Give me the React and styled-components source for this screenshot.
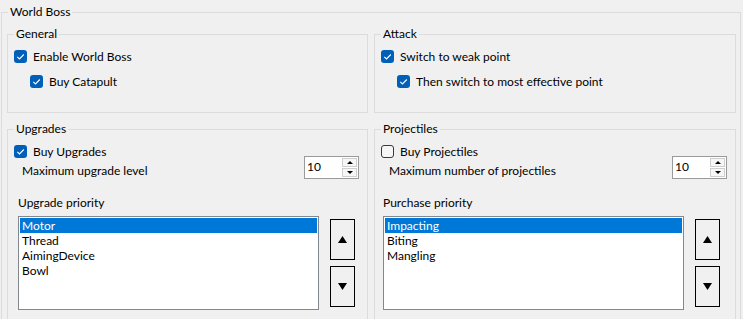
import React from "react";
import styled, { createGlobalStyle } from "styled-components";

const upgrades = ["Motor", "Thread", "AimingDevice", "Bowl"];
const projectiles = ["Impacting", "Biting", "Mangling"];

const Tick = () => (
  <svg width="13" height="13" viewBox="0 0 13 13">
    <path d="M3.3 6.8 L5.5 9 L9.8 4.5" stroke="#fff" strokeWidth="1.1" fill="none" />
  </svg>
);

const Check = ({ checked, nested, children }) => (
  <CheckRow $nested={nested}>
    <Box $checked={checked}>{checked && <Tick />}</Box>
    <span>{children}</span>
  </CheckRow>
);

const Triangle = ({ down, w = 9, h = 7 }) => (
  <svg width={w} height={h} viewBox={`0 0 ${w} ${h}`}>
    <polygon points={down ? `0,0 ${w},0 ${w / 2},${h}` : `0,${h} ${w},${h} ${w / 2},0`} fill="#000" />
  </svg>
);

const Spinner = ({ value }) => (
  <SpinBox>
    <SpinValue>{value}</SpinValue>
    <SpinButtons>
      <SpinButton><Triangle w={6} h={3} /></SpinButton>
      <SpinButton><Triangle down w={6} h={3} /></SpinButton>
    </SpinButtons>
  </SpinBox>
);

const Priority = ({ title, items, inset }) => (
  <PrioritySection $inset={inset}>
    <PriorityLabel>{title}</PriorityLabel>
    <ListRow>
      <ListBox>
        {items.map((item, i) => (
          <ListItem key={item} $selected={i === 0}>{item}</ListItem>
        ))}
      </ListBox>
      <MoveButtons>
        <MoveButton><Triangle /></MoveButton>
        <MoveButton><Triangle down /></MoveButton>
      </MoveButtons>
    </ListRow>
  </PrioritySection>
);

const App = () => (
  <>
    <GlobalStyle />
    <Page>
      <Frame>
        <Caption>World Boss</Caption>
        <Columns>
          <Group $height={87}>
            <Caption>General</Caption>
            <Body>
              <CheckList>
                <Check checked>Enable World Boss</Check>
                <Check checked nested>Buy Catapult</Check>
              </CheckList>
            </Body>
          </Group>
          <Group $height={87}>
            <Caption>Attack</Caption>
            <Body>
              <CheckList>
                <Check checked>Switch to weak point</Check>
                <Check checked nested>Then switch to most effective point</Check>
              </CheckList>
            </Body>
          </Group>
          <Group>
            <Caption>Upgrades</Caption>
            <Body>
              <Options>
                <OptionCheck><Check checked>Buy Upgrades</Check></OptionCheck>
                <OptionLabel>Maximum upgrade level</OptionLabel>
                <OptionSpin><Spinner value="10" /></OptionSpin>
              </Options>
              <Priority title="Upgrade priority" items={upgrades} inset={4} />
            </Body>
          </Group>
          <Group>
            <Caption>Projectiles</Caption>
            <Body>
              <Options>
                <OptionCheck><Check>Buy Projectiles</Check></OptionCheck>
                <OptionLabel>Maximum number of projectiles</OptionLabel>
                <OptionSpin><Spinner value="10" /></OptionSpin>
              </Options>
              <Priority title="Purchase priority" items={projectiles} inset={2} />
            </Body>
          </Group>
        </Columns>
      </Frame>
    </Page>
  </>
);

const GlobalStyle = createGlobalStyle`
  *, *::before, *::after { box-sizing: border-box; }
  html, body {
    margin: 0;
    overflow: hidden;
    background: #f0f0f0;
  }
  body {
    font-family: Lato, "Noto Sans", sans-serif;
    font-size: 12px;
    color: #000;
  }
`;

const Page = styled.div`
  padding: 4px 2px 0 1px;
`;

const Frame = styled.fieldset`
  margin: 0;
  padding: 0;
  min-width: 0;
  width: 740px;
  border: 1px solid #dcdcdc;
`;

const Caption = styled.legend`
  margin-left: 6px;
  padding: 0 2px;
  line-height: 16px;
`;

const Columns = styled.div`
  display: grid;
  grid-template-columns: 361px 362px;
  column-gap: 6px;
  row-gap: 8px;
  padding: 6px 4px 0 5px;
`;

const Group = styled.fieldset`
  margin: 0;
  padding: 0;
  min-width: 0;
  border: 1px solid #dcdcdc;
  height: ${(p) => (p.$height ? `${p.$height}px` : "auto")};
`;

const Body = styled.div`
  display: flex;
  flex-direction: column;
  padding: 7px 8px 14px 6px;
`;

const CheckList = styled.div`
  display: flex;
  flex-direction: column;
  gap: 10px;
`;

const CheckRow = styled.label`
  display: flex;
  align-items: center;
  gap: 6px;
  height: 15px;
  line-height: 15px;
  padding-left: ${(p) => (p.$nested ? "16px" : "0")};
  white-space: nowrap;
`;

const Box = styled.span`
  flex: none;
  width: 13px;
  height: 13px;
  border-radius: 3px;
  display: grid;
  place-items: center;
  background: ${(p) => (p.$checked ? "#005fb8" : "#f6f6f6")};
  border: ${(p) => (p.$checked ? "none" : "1px solid #3a3a3a")};
`;

const Options = styled.div`
  display: grid;
  grid-template-columns: 1fr auto;
  grid-template-rows: 12px 3px 20px;
  grid-template-areas:
    "check ."
    "check spin"
    "label spin";
`;

const OptionCheck = styled.div`
  grid-area: check;
`;

const OptionLabel = styled.div`
  grid-area: label;
  align-self: end;
  line-height: 16px;
  padding-left: 8px;
`;

const OptionSpin = styled.div`
  grid-area: spin;
`;

const SpinBox = styled.div`
  display: flex;
  width: 55px;
  height: 23px;
  border: 1px solid #9a9a9a;
  background: #fff;
  padding: 1px;
`;

const SpinValue = styled.div`
  flex: 1;
  padding-left: 1px;
  line-height: 17px;
`;

const SpinButtons = styled.div`
  display: grid;
  grid-template-rows: 1fr 1fr;
  gap: 1px;
  width: 15px;
`;

const SpinButton = styled.div`
  display: grid;
  place-items: center;
  border: 1px solid #cfcfcf;
  background: #f6f6f6;
`;

const PrioritySection = styled.div`
  margin-left: ${(p) => p.$inset}px;
`;

const PriorityLabel = styled.div`
  margin-top: 16px;
  line-height: 16px;
`;

const ListRow = styled.div`
  display: flex;
  align-items: flex-start;
  gap: 11px;
  margin-top: 5px;
`;

const ListBox = styled.div`
  width: 301px;
  height: 94px;
  border: 1px solid #828790;
  background: #fff;
  padding: 1px;
`;

const ListItem = styled.div`
  height: 15px;
  line-height: 15px;
  padding-left: 2px;
  background: ${(p) => (p.$selected ? "#0078d7" : "transparent")};
  color: ${(p) => (p.$selected ? "#fff" : "#000")};
`;

const MoveButtons = styled.div`
  display: flex;
  flex-direction: column;
  gap: 6px;
  margin-top: 3px;
`;

const MoveButton = styled.div`
  width: 25px;
  height: 41px;
  border: 1px solid #000;
  display: grid;
  place-items: center;
`;

export default App;
